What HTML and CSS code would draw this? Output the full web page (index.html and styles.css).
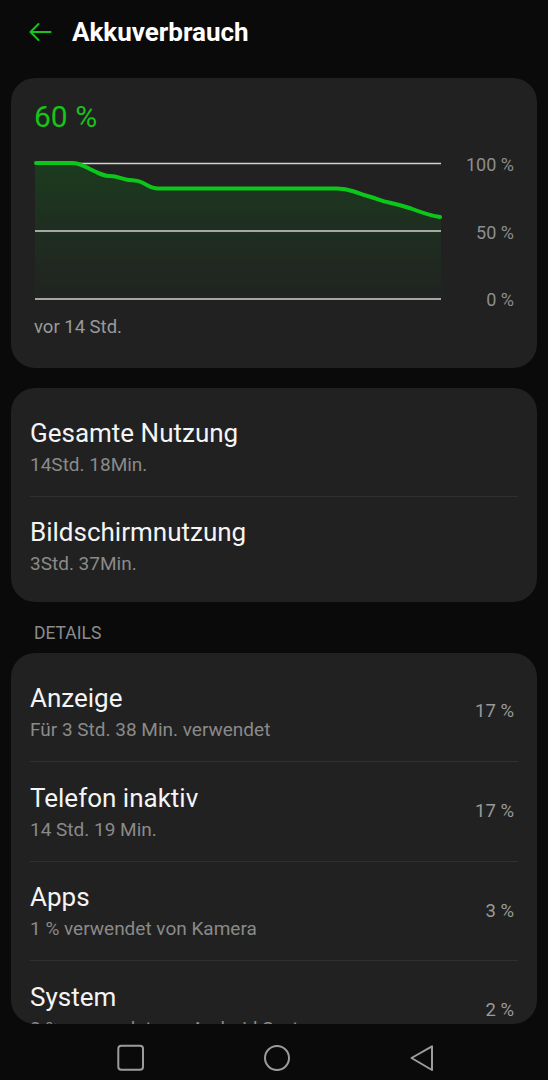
FILE: index.html
```html
<!DOCTYPE html>
<html lang="de">
<head>
<meta charset="utf-8">
<title>Akkuverbrauch</title>
<link rel="stylesheet" href="styles.css">
</head>
<body>
<div class="screen">
  <header class="header">
    <svg class="back" width="24" height="24" viewBox="0 0 24 24" aria-hidden="true">
      <path d="M22.5 12H2.5M10.5 4L2.5 12L10.5 20" fill="none" stroke="#19c31d" stroke-width="2" stroke-linecap="round" stroke-linejoin="round"/>
    </svg>
    <h1 class="title">Akkuverbrauch</h1>
  </header>

  <main class="content">
    <section class="card chart-card">
      <div class="level">60 %</div>
      <div class="chart-row">
        <svg class="chart" width="408" height="156" viewBox="0 0 408 156" aria-hidden="true">
          <defs>
            <linearGradient id="fillg" x1="0" y1="0" x2="0" y2="1">
              <stop offset="0" stop-color="#1b3b1e"/>
              <stop offset="0.45" stop-color="#1e2f20"/>
              <stop offset="1" stop-color="#212321"/>
            </linearGradient>
          </defs>
          <path d="M1,10 L38,10 C46,10 50,13 58,17 C66,21 70,23 76,23 C82,23 86,25 92,26.5 C98,27.7 102,27 107,29 C114,32 117,35.5 124,35.5 L303,35.5 C310,35.5 314,36.5 320,38.5 C327,41 330,42.5 337,44 C344,46 348,48.5 355,49.5 C362,51 367,52 377,55.5 C386,59 396,62.5 407,64 L407,146 L1,146 Z" fill="url(#fillg)"/>
          <line x1="1" y1="10.5" x2="407" y2="10.5" stroke="#d2d2d2" stroke-width="1.6"/>
          <line x1="1" y1="78" x2="407" y2="78" stroke="#d2d2d2" stroke-width="1.6"/>
          <line x1="1" y1="146" x2="407" y2="146" stroke="#d2d2d2" stroke-width="1.6"/>
          <path d="M2,10 L38,10 C46,10 50,13 58,17 C66,21 70,23 76,23 C82,23 86,25 92,26.5 C98,27.7 102,27 107,29 C114,32 117,35.5 124,35.5 L303,35.5 C310,35.5 314,36.5 320,38.5 C327,41 330,42.5 337,44 C344,46 348,48.5 355,49.5 C362,51 367,52 377,55.5 C386,59 396,62.5 406,64" fill="none" stroke="#0cc71a" stroke-width="4" stroke-linecap="round" stroke-linejoin="round"/>
        </svg>
        <div class="axis">
          <span>100 %</span>
          <span>50 %</span>
          <span>0 %</span>
        </div>
      </div>
      <div class="since">vor 14 Std.</div>
    </section>

    <section class="card list-card">
      <div class="row">
        <div class="row-text">
          <div class="row-title">Gesamte Nutzung</div>
          <div class="row-sub">14Std. 18Min.</div>
        </div>
      </div>
      <div class="row">
        <div class="row-text">
          <div class="row-title">Bildschirmnutzung</div>
          <div class="row-sub">3Std. 37Min.</div>
        </div>
      </div>
    </section>

    <div class="section-label">DETAILS</div>

    <section class="card list-card details">
      <div class="row">
        <div class="row-text">
          <div class="row-title">Anzeige</div>
          <div class="row-sub">Für 3 Std. 38 Min. verwendet</div>
        </div>
        <div class="row-value">17 %</div>
      </div>
      <div class="row">
        <div class="row-text">
          <div class="row-title">Telefon inaktiv</div>
          <div class="row-sub">14 Std. 19 Min.</div>
        </div>
        <div class="row-value">17 %</div>
      </div>
      <div class="row">
        <div class="row-text">
          <div class="row-title">Apps</div>
          <div class="row-sub">1 % verwendet von Kamera</div>
        </div>
        <div class="row-value">3 %</div>
      </div>
      <div class="row">
        <div class="row-text">
          <div class="row-title">System</div>
          <div class="row-sub">2 % verwendet von Android System</div>
        </div>
        <div class="row-value">2 %</div>
      </div>
    </section>
  </main>

  <nav class="navbar">
    <div class="nav-cell">
      <svg width="30" height="30" viewBox="0 0 30 30" aria-hidden="true">
        <rect x="2.3" y="2.7" width="24.7" height="24" rx="3" fill="none" stroke="#9c9c9c" stroke-width="2"/>
      </svg>
    </div>
    <div class="nav-cell">
      <svg width="30" height="30" viewBox="0 0 30 30" aria-hidden="true">
        <circle cx="15" cy="15" r="12" fill="none" stroke="#9c9c9c" stroke-width="2"/>
      </svg>
    </div>
    <div class="nav-cell">
      <svg width="30" height="30" viewBox="0 0 30 30" aria-hidden="true">
        <path d="M25 3.3 L4.5 15 L25 27 Z" fill="none" stroke="#9c9c9c" stroke-width="2" stroke-linejoin="round"/>
      </svg>
    </div>
  </nav>
</div>
</body>
</html>
```

FILE: styles.css
```css
* { box-sizing: border-box; }

html, body {
  margin: 0;
  padding: 0;
  background: #0a0a0a;
}

body {
  font-family: Roboto, "Noto Sans", "Liberation Sans", sans-serif;
  color: #f2f2f2;
}

.screen {
  width: 548px;
  height: 1080px;
  display: flex;
  flex-direction: column;
  overflow: hidden;
}

.header {
  height: 64px;
  display: flex;
  align-items: center;
  padding-left: 28px;
  gap: 20px;
  flex: none;
}

.back { display: block; }

.title {
  margin: 0;
  font-size: 26px;
  font-weight: 700;
  line-height: 32px;
  color: #ffffff;
}

.content {
  flex: 1;
  min-height: 0;
  padding: 14px 11px 0;
  display: flex;
  flex-direction: column;
}

.card {
  background: #212121;
  border-radius: 24px;
}

.chart-card {
  padding: 21px 23px 31px;
}

.level {
  font-size: 30px;
  line-height: 36px;
  color: #16c41a;
}

.chart-row {
  margin-top: 18px;
  display: flex;
}

.chart { display: block; flex: none; }

.axis {
  flex: 1;
  display: flex;
  flex-direction: column;
  align-items: flex-end;
  padding-top: 2px;
  gap: 47.5px;
  font-size: 18px;
  line-height: 20px;
  color: #8e8e8e;
}

.since {
  margin-top: 7px;
  font-size: 18.5px;
  line-height: 20px;
  color: #9a9a9a;
}

.list-card {
  margin-top: 20px;
  padding: 9px 0 7px;
}

.row {
  margin: 0 19px;
  padding: 20.5px 4px 16.2px 0;
  display: flex;
  align-items: center;
  border-top: 1px solid #303030;
}

.row:first-child { border-top: none; }

.row-text { flex: 1; min-width: 0; }

.row-title {
  font-size: 26px;
  line-height: 31px;
  color: #f4f4f4;
  white-space: nowrap;
}

.row-sub {
  font-size: 19px;
  line-height: 31px;
  color: #8a8a8a;
  white-space: nowrap;
}

.row-value {
  font-size: 18.5px;
  line-height: 24px;
  color: #9a9a9a;
  flex: none;
  margin-bottom: 5px;
}

.section-label {
  margin: 21px 0 0 23px;
  font-size: 17.5px;
  line-height: 20px;
  color: #8c8c8c;
}

.details {
  margin-top: 10px;
  height: 371px;
  overflow: hidden;
  flex: none;
}

.navbar {
  height: 55px;
  flex: none;
  display: flex;
  justify-content: center;
  align-items: center;
  padding: 11px 0 0 5px;
  background: #0a0a0a;
}

.nav-cell {
  width: 145.5px;
  display: flex;
  justify-content: center;
}

.nav-cell svg { display: block; }
```
